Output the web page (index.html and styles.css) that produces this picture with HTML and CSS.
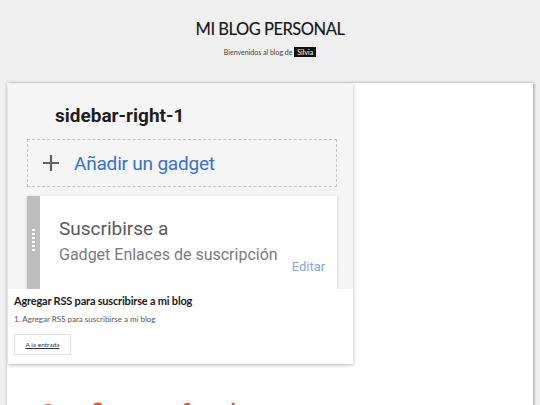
FILE: index.html
```html
<!DOCTYPE html>
<html>
<head>
<meta charset="utf-8">
<link rel="stylesheet" href="styles.css">
</head>
<body>
<header class="site-header">
  <h1 class="site-title">MI BLOG PERSONAL</h1>
  <p class="site-desc">Bienvenidos al blog de <span class="badge">Silvia</span></p>
</header>
<main class="main">
  <article class="card">
    <div class="shot">
      <div class="shot-title">sidebar-right-1</div>
      <div class="add-gadget">
        <svg class="plus" width="18" height="18" viewBox="0 0 18 18"><path d="M9 1v16M1 9h16" stroke="#616161" stroke-width="2.2" fill="none"/></svg>
        <span class="add-text">Añadir un gadget</span>
      </div>
      <div class="gadget">
        <div class="handle"><span class="dots"></span></div>
        <div class="gadget-body">
          <div class="g-title">Suscribirse a</div>
          <div class="g-row">
            <span class="g-sub">Gadget Enlaces de suscripción</span>
            <span class="g-edit">Editar</span>
          </div>
        </div>
      </div>
    </div>
    <div class="card-body">
      <h2 class="post-title">Agregar RSS para suscribirse a mi blog</h2>
      <p class="post-snippet">1. Agregar RSS para suscribirse a mi blog</p>
      <a class="post-btn" href="#">A la entrada</a>
    </div>
  </article>
  <div class="next-shot">Configurar feed</div>
</main>
</body>
</html>
```
FILE: styles.css
```css
html, body {
  margin: 0;
  padding: 0;
}
body {
  background: #efefef;
  font-family: Lato, "Noto Sans", sans-serif;
  height: 405px;
  overflow: hidden;
}
.site-header {
  text-align: center;
  padding-top: 18px;
  height: 65px;
  box-sizing: border-box;
}
.site-title {
  margin: 0;
  font-weight: 500;
  font-size: 16.5px;
  line-height: 22px;
  color: #1a1a1a;
  letter-spacing: -0.5px;
}
.site-desc {
  margin: 7px 0 0;
  font-size: 7px;
  line-height: 10px;
  color: #444;
}
.badge {
  background: #111;
  color: #fff;
  padding: 1px 3px;
}
.main {
  margin: 18px 7px 0;
  width: 526px;
  height: 330px;
  background: #fff;
  box-shadow: 0 0 3px rgba(0,0,0,0.25), 2px 0 2px rgba(0,0,0,0.12);
  padding-top: 1px;
  box-sizing: border-box;
  overflow: hidden;
}
.card {
  width: 345px;
  margin-left: 1px;
  background: #fff;
  box-shadow: 0 1px 4px rgba(0,0,0,0.3);
}
.shot {
  height: 205px;
  background: #f5f5f5;
  overflow: hidden;
  padding: 20px 0 0 19px;
  box-sizing: border-box;
  font-family: Roboto, "Noto Sans", sans-serif;
}
.shot-title {
  font-weight: 700;
  font-size: 19px;
  line-height: 24px;
  color: #1e1e1e;
  padding-left: 28px;
}
.add-gadget {
  margin-top: 11px;
  width: 310px;
  height: 48px;
  box-sizing: border-box;
  border: 1px dashed #c4c4c4;
  display: flex;
  align-items: center;
  padding-left: 14px;
  gap: 14px;
}
.add-text {
  color: #3a6fd0;
  font-size: 19px;
  letter-spacing: -0.2px;
}
.gadget {
  margin-top: 9px;
  width: 310px;
  height: 130px;
  background: #fff;
  box-shadow: 0 1px 3px rgba(0,0,0,0.2);
  display: flex;
}
.handle {
  width: 13px;
  background: #bdbdbd;
  position: relative;
}
.dots {
  position: absolute;
  left: 5px;
  top: 33px;
  width: 3px;
  height: 22px;
  background: repeating-linear-gradient(#fff 0 2px, transparent 2px 4px);
}
.gadget-body {
  padding: 21px 0 0 19px;
  flex: 1;
}
.g-title {
  font-size: 19px;
  line-height: 24px;
  color: #5a5a5a;
}
.g-row {
  display: flex;
  align-items: flex-end;
  margin-top: 4px;
}
.g-sub {
  font-size: 16px;
  line-height: 20px;
  color: #7b7b7b;
}
.g-edit {
  margin-left: 14px;
  margin-bottom: -9px;
  font-size: 13px;
  color: #8aa4e0;
}
.card-body {
  padding: 4px 6px 9px;
}
.post-title {
  margin: 0;
  font-weight: 700;
  font-size: 11px;
  line-height: 16px;
  letter-spacing: -0.2px;
  color: #1a1a1a;
}
.post-snippet {
  margin: 5px 0 0;
  font-size: 8px;
  line-height: 10px;
  color: #555;
}
.post-btn {
  display: inline-block;
  margin-top: 10px;
  width: 57px;
  height: 21px;
  box-sizing: border-box;
  border: 1px solid #e2e2e2;
  text-align: center;
  font-size: 6.5px;
  line-height: 19px;
  color: #333;
}
.next-shot {
  margin: 37px 0 0 31px;
  font-family: Roboto, sans-serif;
  font-size: 29px;
  line-height: 29px;
  color: #f4511e;
  white-space: nowrap;
}
```
